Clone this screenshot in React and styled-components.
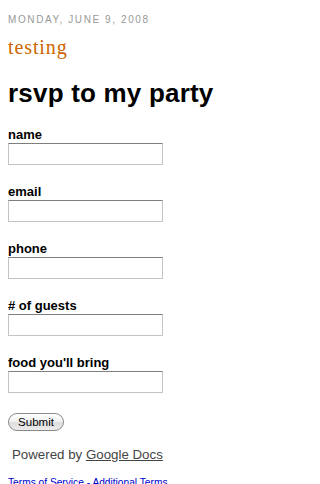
import React from "react";
import styled, { createGlobalStyle } from "styled-components";

const Global = createGlobalStyle`
  html, body { margin: 0; padding: 0; background: #fff; }
  body { font-family: "Liberation Sans", Arial, sans-serif; }
`;

const Page = styled.div`
  display: flex;
  flex-direction: column;
  padding: 13.5px 8px 0 8px;
`;

const DateHeader = styled.div`
  font-family: "Liberation Sans", Arial, sans-serif;
  font-size: 10px;
  line-height: 12px;
  letter-spacing: 1.6px;
  text-transform: uppercase;
  color: #999;
`;

const PostTitle = styled.div`
  margin-top: 9px;
  font-family: Georgia, "Liberation Serif", serif;
  font-size: 20px;
  line-height: 24px;
  letter-spacing: 0.9px;
  color: #c60;
`;

const FormTitle = styled.h1`
  margin: 19.5px 0 0 0;
  font-family: "Liberation Sans", Arial, sans-serif;
  font-weight: bold;
  font-size: 26px;
  line-height: 30px;
  letter-spacing: 0.2px;
  color: #000;
`;

const Form = styled.form`
  display: flex;
  flex-direction: column;
  gap: 18px;
  margin-top: 17.5px;
`;

const Field = styled.div`
  display: flex;
  flex-direction: column;
`;

const Label = styled.label`
  font-family: "Liberation Sans", Arial, sans-serif;
  font-weight: bold;
  font-size: 13px;
  line-height: 17px;
  color: #000;
`;

const TextInput = styled.input`
  box-sizing: border-box;
  width: 155px;
  height: 22px;
  margin: 0;
  padding: 2px 3px;
  border: 1px solid #c4c4c4;
  border-top-color: #7e7e7e;
  background: #fff;
  font-family: "Liberation Sans", Arial, sans-serif;
  font-size: 13px;
  outline: none;
`;

const SubmitButton = styled.button`
  align-self: flex-start;
  margin-top: 20px;
  box-sizing: border-box;
  width: 56px;
  height: 18px;
  padding: 0;
  border: 1px solid #8a8a8a;
  border-radius: 9px;
  background: linear-gradient(to bottom, #ffffff 0%, #f2f2f2 45%, #dedede 55%, #ececec 100%);
  box-shadow: inset 0 1px 0 #fff;
  font-family: "Liberation Sans", Arial, sans-serif;
  font-size: 11.5px;
  line-height: 16px;
  color: #000;
`;

const Powered = styled.div`
  margin-top: 16px;
  padding-left: 4px;
  font-family: "Liberation Sans", Arial, sans-serif;
  font-size: 13.3px;
  line-height: 16px;
  color: #444;
`;

const GrayLink = styled.a`
  color: #444;
  text-decoration: underline;
`;

const Footer = styled.div`
  margin-top: 14px;
  font-family: "Liberation Sans", Arial, sans-serif;
  font-size: 10.2px;
  line-height: 12px;
  color: #00c;
`;

const BlueLink = styled.a`
  color: #00c;
  text-decoration: none;
`;

const fields = ["name", "email", "phone", "# of guests", "food you'll bring"];

export default function App() {
  return (
    <>
      <Global />
      <Page>
        <DateHeader>Monday, June 9, 2008</DateHeader>
        <PostTitle>testing</PostTitle>
        <FormTitle>rsvp to my party</FormTitle>
        <Form onSubmit={(e) => e.preventDefault()}>
          {fields.map((f) => (
            <Field key={f}>
              <Label>{f}</Label>
              <TextInput type="text" />
            </Field>
          ))}
        </Form>
        <SubmitButton type="button">Submit</SubmitButton>
        <Powered>
          Powered by <GrayLink href="#">Google Docs</GrayLink>
        </Powered>
        <Footer>
          <BlueLink href="#">Terms of Service</BlueLink> -{" "}
          <BlueLink href="#">Additional Terms</BlueLink>
        </Footer>
      </Page>
    </>
  );
}
